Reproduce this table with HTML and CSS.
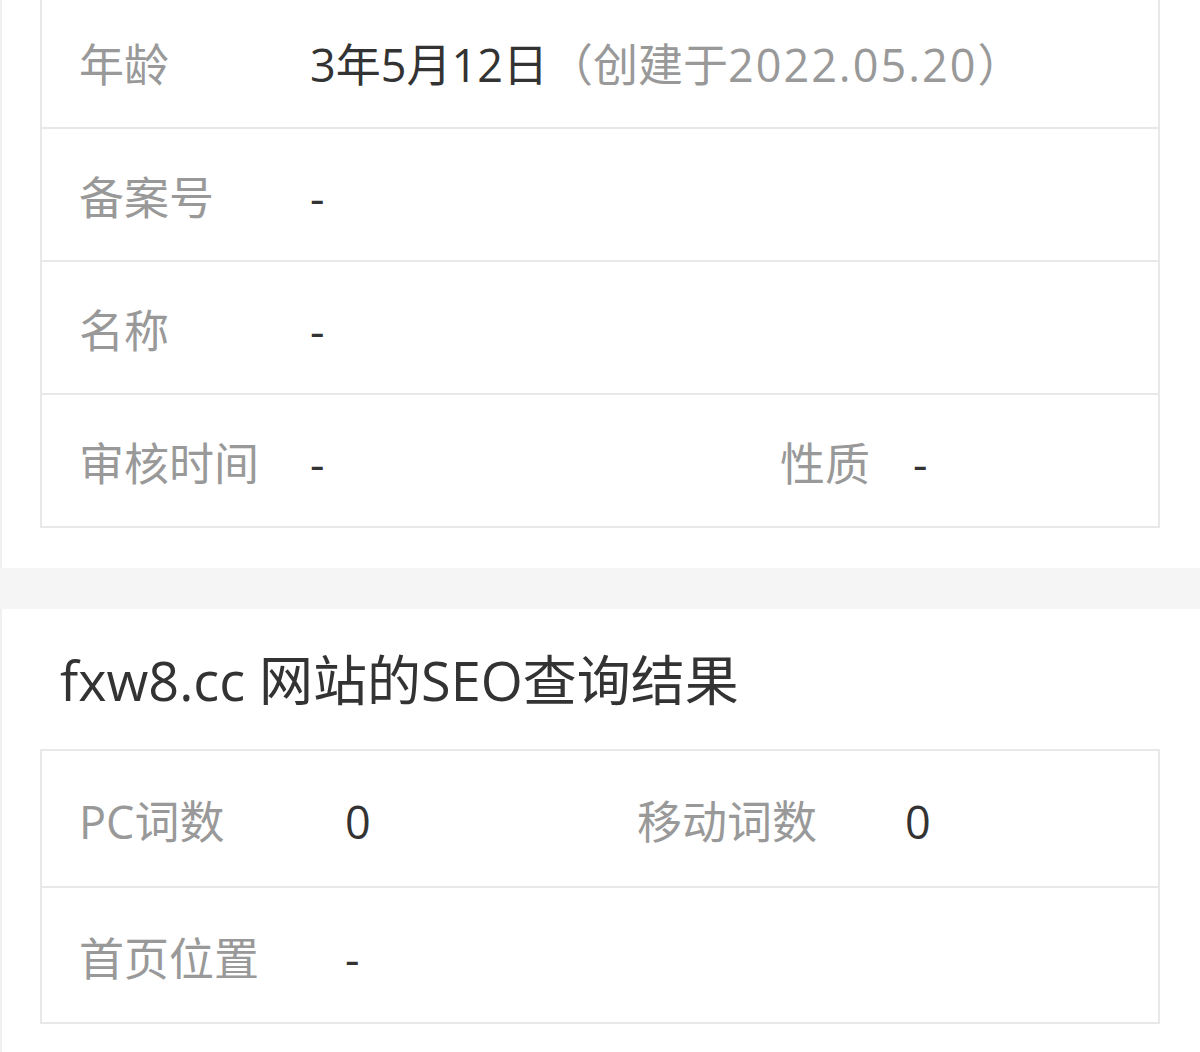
FILE: index.html
```html
<!DOCTYPE html>
<html lang="zh-CN">
<head>
  <meta charset="UTF-8" />
  <meta name="viewport" content="width=device-width, initial-scale=1.0" />
  <title>fxw8.cc 网站信息</title>
  <link rel="stylesheet" href="styles.css">
</head>
<body>
  <div class="section section-beian">
    <div class="info-table t-beian">
      <div class="row">
        <span class="label">年龄</span>
        <span class="value span-3">3年5月12日<span class="muted">（创建于<span class="num">2022.05.20</span>）</span></span>
      </div>
      <div class="row">
        <span class="label">备案号</span>
        <span class="value span-3">-</span>
      </div>
      <div class="row">
        <span class="label">名称</span>
        <span class="value span-3">-</span>
      </div>
      <div class="row">
        <span class="label">审核时间</span>
        <span class="value">-</span>
        <span class="label">性质</span>
        <span class="value">-</span>
      </div>
    </div>
  </div>

  <div class="divider"></div>

  <div class="section section-seo">
    <h2 class="section-title">fxw8.cc 网站的SEO查询结果</h2>
    <div class="info-table t-seo">
      <div class="row">
        <span class="label">PC词数</span>
        <span class="value">0</span>
        <span class="label">移动词数</span>
        <span class="value">0</span>
      </div>
      <div class="row">
        <span class="label">首页位置</span>
        <span class="value span-3">-</span>
      </div>
    </div>
  </div>
</body>
</html>
```

FILE: styles.css
```css
* { box-sizing: border-box; }
body {
  margin: 0;
  background: #fff;
  color: #333;
  font-family: "Open Sans", "Noto Sans CJK SC", sans-serif;
  overflow: hidden;
}
.section {
  border-left: 2px solid #f0f0f0;
  padding: 0 40px 40px 38px;
}
.section-beian { margin-top: -6px; }
.divider { height: 41px; background: #f5f5f5; }
.section-seo { padding-top: 38px; }
.section-title {
  margin: 0 0 36px 20px;
  font-size: 54px;
  font-weight: normal;
  line-height: 66px;
  color: #333;
}
.info-table {
  border: 2px solid #e8e8e8;
  border-bottom: none;
}
.row {
  display: grid;
  align-items: center;
  height: 133px;
  padding-top: 8px;
  padding-left: 37px;
  border-bottom: 2px solid #e8e8e8;
  font-size: 45px;
  line-height: 1.3;
}
.t-beian .row { grid-template-columns: 231px 470px 133px 1fr; }
.t-seo .row { grid-template-columns: 266px 292px 268px 1fr; height: 137px; }
.t-seo .row:last-child { height: 136px; }
.label { color: #999; white-space: nowrap; }
.value { color: #333; white-space: nowrap; }
.span-3 { grid-column: 2 / 5; }
.muted { color: #999; }
.num { letter-spacing: 2px; }
```
